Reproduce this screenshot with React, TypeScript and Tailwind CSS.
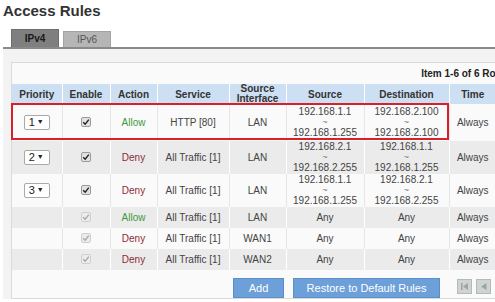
import React from "react";

type Rule = {
  priority?: number;
  enabled: boolean;
  locked?: boolean;
  action: "Allow" | "Deny";
  service: string;
  iface: string;
  source: [string, string] | "Any";
  dest: [string, string] | "Any";
  time: string;
};

const RULES: Rule[] = [
  { priority: 1, enabled: true, action: "Allow", service: "HTTP [80]", iface: "LAN", source: ["192.168.1.1", "192.168.1.255"], dest: ["192.168.2.100", "192.168.2.100"], time: "Always" },
  { priority: 2, enabled: true, action: "Deny", service: "All Traffic [1]", iface: "LAN", source: ["192.168.2.1", "192.168.2.255"], dest: ["192.168.1.1", "192.168.1.255"], time: "Always" },
  { priority: 3, enabled: true, action: "Deny", service: "All Traffic [1]", iface: "LAN", source: ["192.168.1.1", "192.168.1.255"], dest: ["192.168.2.1", "192.168.2.255"], time: "Always" },
  { enabled: true, locked: true, action: "Allow", service: "All Traffic [1]", iface: "LAN", source: "Any", dest: "Any", time: "Always" },
  { enabled: true, locked: true, action: "Deny", service: "All Traffic [1]", iface: "WAN1", source: "Any", dest: "Any", time: "Always" },
  { enabled: true, locked: true, action: "Deny", service: "All Traffic [1]", iface: "WAN2", source: "Any", dest: "Any", time: "Always" },
];

const ROW_H = ["h-[37px]", "h-[33px]", "h-[33px]", "h-[21px]", "h-[21px]", "h-[21px]"];

function Range({ v }: { v: [string, string] | "Any" }) {
  if (v === "Any") return <>Any</>;
  return (
    <div className="flex flex-col items-center leading-[10.5px]">
      <span>{v[0]}</span>
      <span className="text-[9px] text-[#777]">~</span>
      <span>{v[1]}</span>
    </div>
  );
}

function Check({ locked }: { locked?: boolean }) {
  return (
    <span
      className={
        "inline-flex h-[10px] w-[10px] items-center justify-center rounded-[2px] border " +
        (locked ? "border-[#cfcfcf] bg-[#ececec]" : "border-[#9a9a9a] bg-[#e2e2e2]")
      }
    >
      <svg width="8" height="8" viewBox="0 0 8 8">
        <path
          d="M1.2 4.2 L3.2 6.2 L6.8 1.6"
          fill="none"
          stroke={locked ? "#a8a8a8" : "#222"}
          strokeWidth="1.4"
        />
      </svg>
    </span>
  );
}

function PrioritySelect({ n }: { n: number }) {
  return (
    <span className="inline-flex h-[15px] w-[26px] items-center justify-between rounded-[2px] border border-[#a9a9a9] bg-white pl-[4px] pr-[5px] text-[11px] text-[#222]">
      {n}
      <span className="text-[7px]">▼</span>
    </span>
  );
}

export default function App() {
  return (
    <div className="h-[302px] w-[495px] overflow-hidden bg-white font-['Liberation_Sans',Arial,sans-serif] text-[#444]">
      <h1 className="pl-[3px] pt-[1px] text-[15px] font-bold leading-[20px] text-[#333]">Access Rules</h1>

      <div className="mt-[8px] flex items-end gap-[4px] pl-[11px]">
        <div className="flex h-[18px] w-[48px] items-center justify-center border border-b-0 border-[#6e6e6e] bg-[#7f7f7f] text-[10px] font-bold text-[#1a1a1a]">
          IPv4
        </div>
        <div className="flex h-[16px] w-[48px] items-center justify-center border border-b-0 border-[#a3a3a3] bg-[#b6b6b6] text-[10px] text-[#555]">
          IPv6
        </div>
      </div>

      <div className="ml-[3px] border-t-2 border-[#8a8a8a] bg-[#f3f3f3] pl-[8px] pt-[13px]">
        <div className="w-[500px] border border-[#dadada] bg-[#fafafa]">
          <div className="h-[21px] pr-[1px] pt-[3px] text-right text-[10px] font-bold text-[#222]">
            Item 1-6 of 6 Rows
          </div>

          <div className="relative">
            <table className="w-[484px] table-fixed border-collapse text-center text-[10px]">
              <colgroup>
                <col className="w-[50px]" />
                <col className="w-[48px]" />
                <col className="w-[47px]" />
                <col className="w-[72px]" />
                <col className="w-[57px]" />
                <col className="w-[78px]" />
                <col className="w-[85px]" />
                <col className="w-[47px]" />
              </colgroup>
              <thead>
                <tr className="h-[19px] bg-[#cddff2] text-[10px] font-bold text-[#333]">
                  <th className="border-r border-white font-bold">Priority</th>
                  <th className="border-r border-white font-bold">Enable</th>
                  <th className="border-r border-white font-bold">Action</th>
                  <th className="border-r border-white font-bold">Service</th>
                  <th className="border-r border-white font-bold leading-[10px]">
                    Source
                    <br />
                    Interface
                  </th>
                  <th className="border-r border-white font-bold">Source</th>
                  <th className="border-r border-white font-bold">Destination</th>
                  <th className="font-bold">Time</th>
                </tr>
              </thead>
              <tbody>
                {RULES.map((r, i) => {
                  const gray = i % 2 === 1;
                  const cell = "border-r p-0 " + (gray ? "border-white" : "border-[#e6e6e6]");
                  return (
                    <tr key={i} className={ROW_H[i] + " " + (gray ? "bg-[#ebebeb]" : "bg-[#fafafa]")}>
                      <td className={cell}>{r.priority ? <PrioritySelect n={r.priority} /> : null}</td>
                      <td className={cell}>
                        <Check locked={r.locked} />
                      </td>
                      <td className={cell + (r.action === "Allow" ? " text-[#3c9a3c]" : " text-[#8e2b35]")}>
                        {r.action}
                      </td>
                      <td className={cell}>{r.service}</td>
                      <td className={cell}>{r.iface}</td>
                      <td className={cell}>
                        <Range v={r.source} />
                      </td>
                      <td className={cell}>
                        <Range v={r.dest} />
                      </td>
                      <td className="p-0">{r.time}</td>
                    </tr>
                  );
                })}
              </tbody>
            </table>
            {/* highlight box drawn over the first rule */}
            <div className="pointer-events-none absolute left-[-1px] top-[19px] h-[37px] w-[438px] border-2 border-[#d81f2a]" />
          </div>

          <div className="flex h-[28px] items-end pl-[221px]">
            <button className="h-[20px] w-[51px] border border-[#5b8fc9] bg-[#6d9fd8] text-[11px] text-white">Add</button>
            <button className="ml-[9px] h-[20px] w-[147px] border border-[#5b8fc9] bg-[#6d9fd8] text-[11px] text-white">
              Restore to Default Rules
            </button>
            <div className="mb-[4px] ml-[17px] flex gap-[4px]">
              <span className="flex h-[15px] w-[15px] items-center justify-center border border-[#b8b8b8] bg-[#cfd3d3]">
                <svg width="9" height="9" viewBox="0 0 9 9">
                  <rect x="1" y="1" width="1.5" height="7" fill="#9aa5a5" />
                  <path d="M8 1 L3 4.5 L8 8 Z" fill="#9aa5a5" />
                </svg>
              </span>
              <span className="flex h-[15px] w-[15px] items-center justify-center border border-[#b8b8b8] bg-[#cfd3d3]">
                <svg width="9" height="9" viewBox="0 0 9 9">
                  <path d="M7.5 1 L2 4.5 L7.5 8 Z" fill="#9aa5a5" />
                </svg>
              </span>
            </div>
          </div>
        </div>
      </div>
    </div>
  );
}
